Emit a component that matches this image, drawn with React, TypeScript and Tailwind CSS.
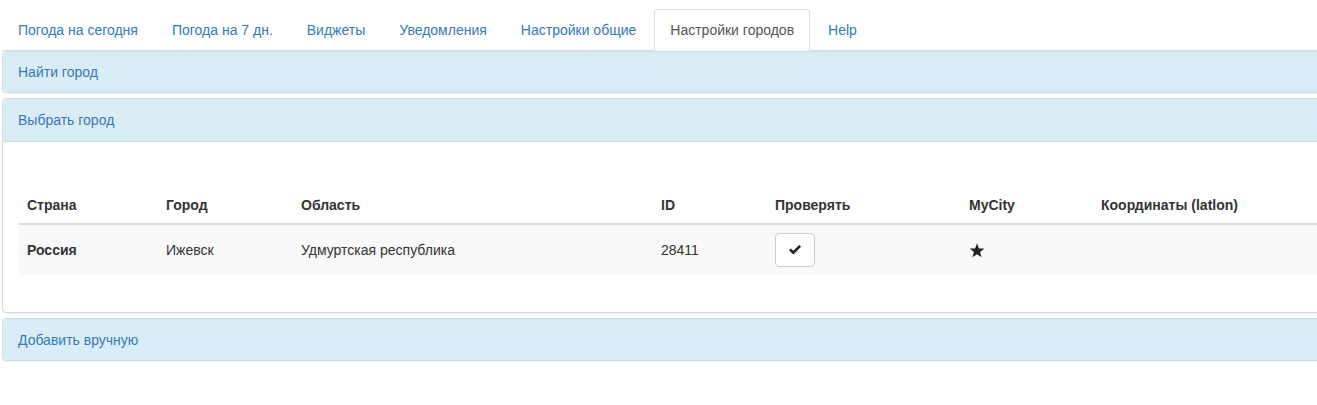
import React from 'react';

const tabs = [
  'Погода на сегодня',
  'Погода на 7 дн.',
  'Виджеты',
  'Уведомления',
  'Настройки общие',
  'Настройки городов',
  'Help',
];

const ACTIVE = 'Настройки городов';

const PanelHeading: React.FC<{ title: string; tall?: boolean }> = ({ title, tall }) => (
  <div
    className={`bg-[#d9edf7] px-[15px] pb-[10px] leading-[20px] text-[14px] text-[#3a78b5] rounded-[4px] ${
      tall ? 'pt-[11px]' : 'pt-[10px]'
    }`}
  >
    {title}
  </div>
);

export default function App() {
  return (
    <div
      className="w-[1317px] h-[405px] overflow-hidden bg-white text-[14px] text-[#333]"
      style={{ fontFamily: '"Liberation Sans", Arial, sans-serif' }}
    >
      <div className="w-[1420px] pl-[3px] pt-[9px]">
        {/* Tabs */}
        <ul className="flex border-b border-[#ddd] -ml-px">
          {tabs.map((t) => {
            const active = t === ACTIVE;
            return (
              <li key={t} className="mr-[2px] -mb-px">
                <span
                  className={`block px-[15px] py-[10px] leading-[20px] rounded-t-[4px] border ${
                    active
                      ? 'border-[#ddd] border-b-white bg-white text-[#555]'
                      : 'border-transparent text-[#337ab7]'
                  }`}
                >
                  {t}
                </span>
              </li>
            );
          })}
        </ul>

        <div className="-ml-px">
          {/* Найти город */}
          <div className="rounded-[4px] border border-[#c9e0ea] shadow-[0_1px_1px_rgba(0,0,0,0.05)]">
            <PanelHeading title="Найти город" />
          </div>

          {/* Выбрать город */}
          <div className="mt-[5px] rounded-[4px] border border-[#dadada] shadow-[0_1px_1px_rgba(0,0,0,0.05)]">
            <div className="border-b border-[#c6e0ec] rounded-t-[4px]">
              <div className="bg-[#d9edf7] px-[15px] pt-[11px] pb-[11px] leading-[20px] text-[#3a78b5] rounded-t-[4px]">
                Выбрать город
              </div>
            </div>
            <div className="pl-[16px] pr-[15px] pt-[15px] pb-[15px]">
              <div className="h-[30px]" />
              <table className="w-[1390px] mb-[22px] border-collapse">
                <thead>
                  <tr className="border-b-2 border-[#ddd] text-left">
                    <th className="w-[139px] px-[8px] py-[8px] leading-[20px] font-bold">Страна</th>
                    <th className="w-[135px] px-[8px] py-[8px] leading-[20px] font-bold">Город</th>
                    <th className="w-[360px] px-[8px] py-[8px] leading-[20px] font-bold">Область</th>
                    <th className="w-[114px] px-[8px] py-[8px] leading-[20px] font-bold">ID</th>
                    <th className="w-[194px] px-[8px] py-[8px] leading-[20px] font-bold">Проверять</th>
                    <th className="w-[132px] px-[8px] py-[8px] leading-[20px] font-bold">MyCity</th>
                    <th className="px-[8px] py-[8px] leading-[20px] font-bold">Координаты (latlon)</th>
                  </tr>
                </thead>
                <tbody>
                  <tr className="bg-[#f9f9f9] text-left">
                    <th className="px-[8px] py-[8px] leading-[20px] font-bold align-middle">Россия</th>
                    <td className="px-[8px] py-[8px] leading-[20px] align-middle">Ижевск</td>
                    <td className="px-[8px] py-[8px] leading-[20px] align-middle">Удмуртская республика</td>
                    <td className="px-[8px] py-[8px] leading-[20px] align-middle">28411</td>
                    <td className="px-[8px] py-[8px] leading-[20px] align-middle">
                      <button className="flex items-center justify-center w-[40px] h-[34px] bg-white border border-[#ccc] rounded-[4px]">
                        <svg width="14" height="12" viewBox="0 0 14 12">
                          <path d="M1 6.2 L2.9 4.4 L5.3 6.8 L11.2 0.9 L13.1 2.8 L5.3 10.6 Z" fill="#222" />
                        </svg>
                      </button>
                    </td>
                    <td className="px-[8px] py-[8px] leading-[20px] align-middle">
                      <svg width="16" height="15" viewBox="0 0 24 23">
                        <path
                          d="M12 0.5 L14.9 8.3 L23.2 8.6 L16.7 13.8 L19 21.8 L12 17.2 L5 21.8 L7.3 13.8 L0.8 8.6 L9.1 8.3 Z"
                          fill="#222"
                        />
                      </svg>
                    </td>
                    <td className="px-[8px] py-[8px] leading-[20px] align-middle"></td>
                  </tr>
                </tbody>
              </table>
            </div>
          </div>

          {/* Добавить вручную */}
          <div className="mt-[5px] rounded-[4px] border border-[#c9e0ea] shadow-[0_1px_1px_rgba(0,0,0,0.05)]">
            <PanelHeading title="Добавить вручную" tall />
          </div>
        </div>
      </div>
    </div>
  );
}
